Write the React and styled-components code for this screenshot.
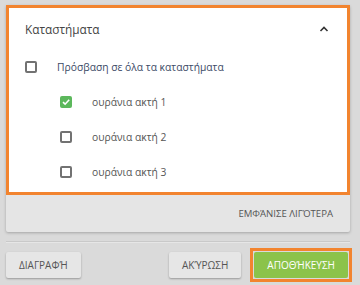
import React, { useState } from "react";
import styled, { createGlobalStyle } from "styled-components";

const GlobalStyle = createGlobalStyle`
  html, body {
    margin: 0;
    padding: 0;
    background-color: #dadada;
    font-family: "Open Sans", "Noto Sans", sans-serif;
  }
`;

const Page = styled.div`
  width: 360px;
  height: 285px;
  box-sizing: border-box;
  padding: 5px 10px 0 6px;
`;

const Card = styled.div`
  background-color: #e5e5e5;
  box-shadow: 0 1px 3px rgba(0, 0, 0, 0.25);
  border-radius: 2px;
`;

const Section = styled.div`
  background-color: #ffffff;
  border: 3px solid #f2842f;
  padding: 0 18px 3px 16px;
`;

const Header = styled.div`
  height: 41px;
  display: flex;
  align-items: center;
  justify-content: space-between;
  font-size: 11.8px;
  color: #444;
`;

const Row = styled.label`
  height: 35px;
  display: flex;
  align-items: center;
  gap: 20px;
  padding-left: ${(props) => (props.$indent ? "35px" : "0")};
  font-size: 10.3px;
  color: ${(props) => (props.$accent ? "#3c4a66" : "#555")};
  cursor: pointer;
`;

const Box = styled.span`
  width: 12px;
  height: 12px;
  box-sizing: border-box;
  border-radius: 2px;
  border: ${(props) => (props.$checked ? "none" : "2px solid #727272")};
  background-color: ${(props) => (props.$checked ? "#5cb85c" : "#fff")};
  display: grid;
  place-items: center;
  flex-shrink: 0;
`;

const Footer = styled.div`
  height: 37px;
  display: flex;
  align-items: center;
  justify-content: flex-end;
  padding-right: 17px;
  font-size: 9.6px;
  color: #555;
`;

const Divider = styled.hr`
  margin: 9px 0 9px;
  border: none;
  border-top: 1px solid #c9c9c9;
  border-bottom: 1px solid #e6e6e6;
`;

const Actions = styled.div`
  display: flex;
  align-items: center;
  height: 26px;
`;

const Spacer = styled.div`
  flex: 1;
`;

const Button = styled.button`
  height: 26px;
  padding: 0 ${(props) => props.$pad || "12px"};
  border: none;
  border-radius: 2px;
  font-family: "Open Sans", "Noto Sans", sans-serif;
  font-size: 10px;
  color: ${(props) => (props.$primary ? "#fff" : "#555")};
  background-color: ${(props) => (props.$primary ? "#8bc34a" : "#e6e6e6")};
  box-shadow: ${(props) =>
    props.$primary ? "none" : "0 1px 2px rgba(0, 0, 0, 0.3)"};
  cursor: pointer;
`;

const Highlight = styled.div`
  margin: -4px -2px -4px 9px;
  padding: 1px;
  border: 3px solid #f2842f;
  display: flex;
`;

function Check({ checked }) {
  return (
    <Box $checked={checked}>
      {checked && (
        <svg width="10" height="10" viewBox="0 0 10 10">
          <path
            d="M2 5.2 L4.1 7.2 L8.2 2.8"
            fill="none"
            stroke="#fff"
            strokeWidth="1.6"
          />
        </svg>
      )}
    </Box>
  );
}

function Chevron() {
  return (
    <svg width="10" height="8" viewBox="0 0 10 8">
      <path
        d="M1.5 6 L5 2.5 L8.5 6"
        fill="none"
        stroke="#333"
        strokeWidth="1.6"
      />
    </svg>
  );
}

export default function App() {
  const [stores] = useState([
    { name: "ουράνια ακτή 1", checked: true },
    { name: "ουράνια ακτή 2", checked: false },
    { name: "ουράνια ακτή 3", checked: false },
  ]);

  return (
    <Page>
      <GlobalStyle />
      <Card>
        <Section>
          <Header>
            <span>Καταστήματα</span>
            <Chevron />
          </Header>
          <Row $accent>
            <Check checked={false} />
            Πρόσβαση σε όλα τα καταστήματα
          </Row>
          {stores.map((s) => (
            <Row key={s.name} $indent>
              <Check checked={s.checked} />
              {s.name}
            </Row>
          ))}
        </Section>
        <Footer>ΕΜΦΆΝΙΣΕ ΛΙΓΌΤΕΡΑ</Footer>
      </Card>
      <Divider />
      <Actions>
        <Button $pad="13px">ΔΙΑΓΡΑΦΉ</Button>
        <Spacer />
        <Button $pad="13px">ΑΚΎΡΩΣΗ</Button>
        <Highlight>
          <Button $primary $pad="13px">ΑΠΟΘΉΚΕΥΣΗ</Button>
        </Highlight>
      </Actions>
    </Page>
  );
}
